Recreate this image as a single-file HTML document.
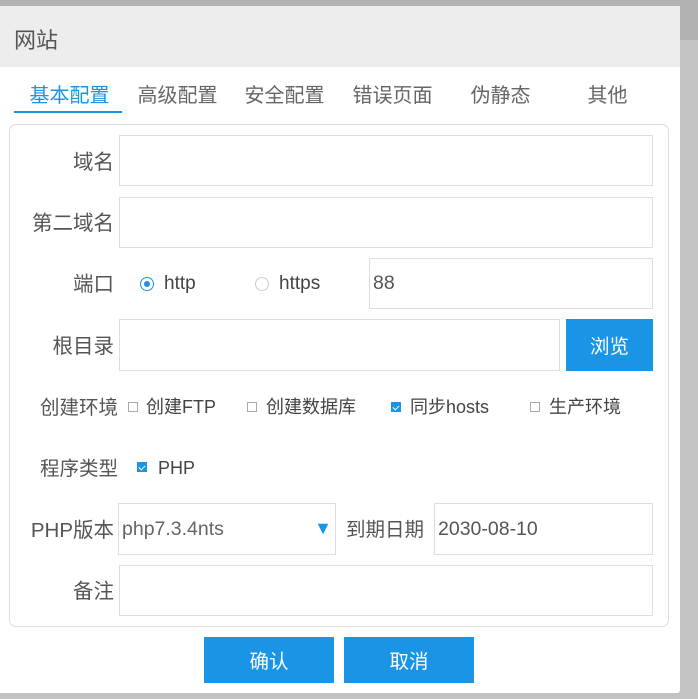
<!DOCTYPE html>
<html><head><meta charset="utf-8"><style>
*{box-sizing:border-box;margin:0;padding:0}
body{width:698px;height:699px;background:#c3c3c3;position:relative;overflow:hidden;font-family:"Liberation Sans","Noto Sans CJK SC",sans-serif;color:#555}
.top{position:absolute;left:0;top:0;width:698px;height:40px;background:#b2b2b2}
.dlg{position:absolute;left:0;top:6px;width:680px;height:687px;background:#fff;border-radius:0 3px 3px 0}
.hd{position:absolute;left:0;top:0;width:680px;height:61px;background:#ededed;font-size:22px;padding-left:14px;color:#555;display:flex;align-items:center;padding-top:5px}
.tab{position:absolute;top:62px;height:46px;width:107px;font-size:20px;display:flex;align-items:center;justify-content:center;padding-top:4px;color:#666}
.tab.on{color:#1a95e6}
.ul{position:absolute;left:14px;top:105px;width:108px;height:2px;background:#1a95e6}
.fs{position:absolute;left:9px;top:118px;width:660px;height:503px;border:1px solid #ddd;border-radius:7px}
.lb{position:absolute;font-size:20.5px;color:#555;text-align:right;width:110px;left:4px;height:30px;line-height:30px}
.in{position:absolute;border:1px solid #ddd;background:#fff;font-size:19.5px;padding-left:3px;color:#555;display:flex;align-items:center}
.btn{position:absolute;background:#1a95e6;color:#fff;font-size:19.5px;display:flex;align-items:center;justify-content:center;padding-bottom:2px}
.t{position:absolute;font-size:18px;color:#444;height:26px;line-height:26px}
.cb{position:absolute;width:10px;height:10px;border:1px solid #aaa;background:#fff}
.cb.c{background:#1a95e6;border-color:#1a95e6}
.cb.c:after{content:"";position:absolute;left:2px;top:1px;width:3px;height:5px;border:solid #fff;border-width:0 1px 1px 0;transform:rotate(45deg)}
</style></head><body>
<div class="top"></div>
<div class="dlg">
<div class="hd">网站</div>
<div class="tab on" style="left:16px">基本配置</div>
<div class="tab" style="left:124px">高级配置</div>
<div class="tab" style="left:231px">安全配置</div>
<div class="tab" style="left:339px">错误页面</div>
<div class="tab" style="left:447px">伪静态</div>
<div class="tab" style="left:554px">其他</div>
<div class="ul"></div>
<div class="fs"></div>
<div class="lb" style="top:142px">域名</div>
<div class="in" style="left:119px;top:129px;width:534px;height:51px"></div>
<div class="lb" style="top:203px">第二域名</div>
<div class="in" style="left:119px;top:191px;width:534px;height:51px"></div>
<div class="lb" style="top:264px">端口</div>
<div style="position:absolute;left:140px;top:271px;width:14px;height:14px;border:1px solid #1a95e6;border-radius:50%"><div style="position:absolute;left:3px;top:3px;width:6px;height:6px;border-radius:50%;background:#1a95e6"></div></div>
<div class="t" style="left:164px;top:265px;font-size:19px">http</div>
<div style="position:absolute;left:255px;top:271px;width:14px;height:14px;border:1px solid #ccc;border-radius:50%"></div>
<div class="t" style="left:279px;top:265px;font-size:19px">https</div>
<div class="in" style="left:369px;top:252px;width:284px;height:51px">88</div>
<div class="lb" style="top:326px">根目录</div>
<div class="in" style="left:119px;top:313px;width:441px;height:52px"></div>
<div class="btn" style="left:566px;top:313px;width:87px;height:52px">浏览</div>
<div class="lb" style="top:387px;width:114px;left:4px;font-size:19.5px">创建环境</div>
<div class="cb" style="left:128px;top:396px"></div><div class="t" style="left:146px;top:388px">创建FTP</div>
<div class="cb" style="left:247px;top:396px"></div><div class="t" style="left:266px;top:388px">创建数据库</div>
<div class="cb c" style="left:391px;top:396px"></div><div class="t" style="left:410px;top:388px">同步hosts</div>
<div class="cb" style="left:530px;top:396px"></div><div class="t" style="left:549px;top:388px">生产环境</div>
<div class="lb" style="top:448px;left:8px;font-size:19.5px">程序类型</div>
<div class="cb c" style="left:137px;top:456px"></div><div class="t" style="left:158px;top:449px">PHP</div>
<div class="lb" style="top:510px;left:4px">PHP版本</div>
<div class="in" style="left:118px;top:497px;width:218px;height:52px;color:#666">php7.3.4nts<span style="position:absolute;right:3px;top:14px;color:#1a95e6;font-size:18px;line-height:20px">▼</span></div>
<div class="t" style="left:346px;top:509px;font-size:19.5px;color:#555;height:30px;line-height:30px">到期日期</div>
<div class="in" style="left:434px;top:497px;width:219px;height:52px">2030-08-10</div>
<div class="lb" style="top:571px">备注</div>
<div class="in" style="left:119px;top:559px;width:534px;height:51px"></div>
<div class="btn" style="left:204px;top:631px;width:130px;height:46px">确认</div>
<div class="btn" style="left:344px;top:631px;width:130px;height:46px">取消</div>
</div>
</body></html>
